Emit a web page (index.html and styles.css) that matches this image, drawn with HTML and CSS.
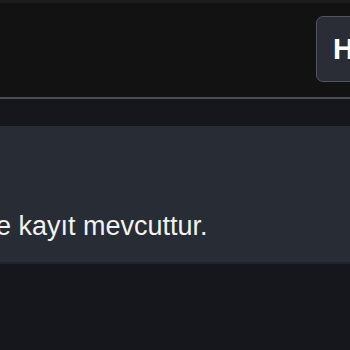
FILE: index.html
```html
<!DOCTYPE html>
<html lang="tr">
<head>
<meta charset="utf-8">
<link rel="stylesheet" href="styles.css">
</head>
<body>
<div class="topstrip"></div>
<header class="header">
  <button class="btn">H</button>
</header>
<main class="main">
  <section class="card">
    <p class="msg">e kayıt mevcuttur.</p>
  </section>
  <div class="cardline"></div>
</main>
</body>
</html>
```
FILE: styles.css
```css
html, body {
  margin: 0;
  padding: 0;
  width: 350px;
  height: 350px;
  overflow: hidden;
  background: #16171c;
  font-family: "Liberation Sans", Arial, sans-serif;
}
.topstrip {
  height: 3px;
  background: #1c1c1d;
}
.header {
  background: #121212;
  border-bottom: 2px solid #4d4d52;
  display: flex;
  align-items: flex-start;
  justify-content: flex-end;
  padding-top: 13px;
  box-sizing: border-box;
  height: 96px;
  overflow: hidden;
}
.btn {
  margin-right: -40px;
  width: 74px;
  height: 66px;
  background: #2a2d36;
  border: 1.5px solid #55565c;
  border-radius: 7px;
  color: #ffffff;
  font-family: "Liberation Sans", Arial, sans-serif;
  font-weight: bold;
  font-size: 29px;
  text-align: left;
  padding: 0 0 0 16px;
  box-sizing: border-box;
}
.main {
  padding-top: 27px;
}
.card {
  height: 136px;
  background: #282c34;
  display: flex;
  align-items: flex-end;
  overflow: hidden;
}
.msg {
  margin: 0 0 21px -4px;
  color: #f2f2f2;
  font-size: 27px;
  line-height: 30px;
}
.cardline {
  height: 2px;
  background: #1c2431;
}
```
